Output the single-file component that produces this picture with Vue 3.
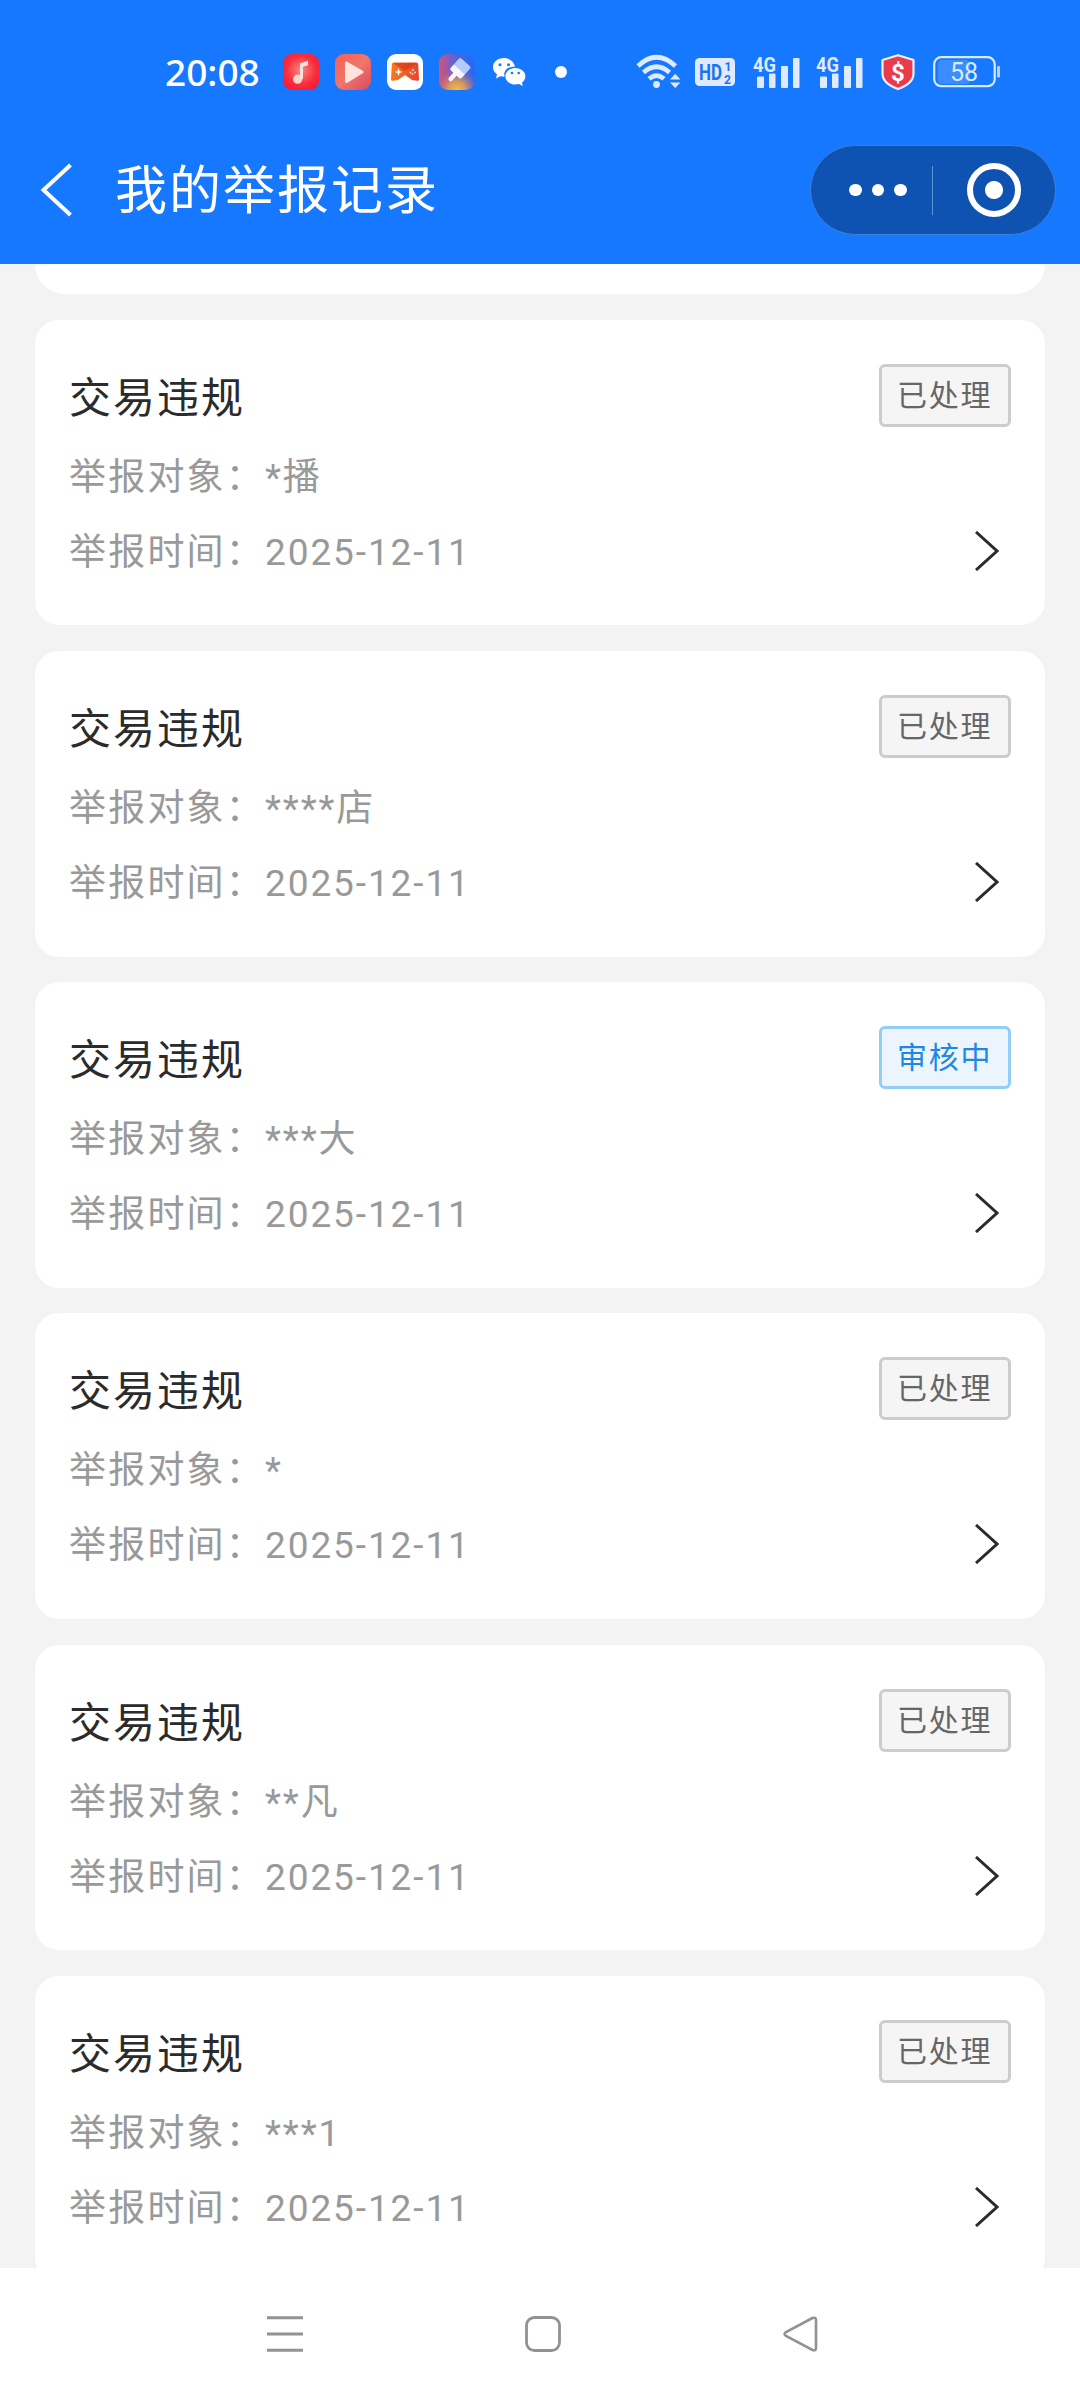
<template>
  <div class="page">
    <div class="status-bar">
      <span class="clock">20:08</span>
      <div class="app-icons">
        <svg class="app-icon" viewBox="0 0 36 36">
          <defs>
            <radialGradient id="music" cx="50%" cy="45%" r="65%">
              <stop offset="0" stop-color="#f98a80" />
              <stop offset="0.6" stop-color="#f8303f" />
              <stop offset="1" stop-color="#fb1530" />
            </radialGradient>
          </defs>
          <rect width="36" height="36" rx="9" fill="url(#music)" />
          <circle cx="14.600" cy="25.200" r="4.600" fill="#ffd3c8" />
          <path d="M17 25V9.500l8-3v4.800l-5 1.500V25z" fill="#ffe2da" />
        </svg>
        <svg class="app-icon" viewBox="0 0 36 36">
          <defs>
            <linearGradient id="video" x1="0" y1="0" x2="1" y2="1">
              <stop offset="0" stop-color="#f4604f" />
              <stop offset="0.5" stop-color="#f0766a" />
              <stop offset="1" stop-color="#d84a63" />
            </linearGradient>
          </defs>
          <rect width="36" height="36" rx="9" fill="url(#video)" />
          <path d="M11.500 9v18.500L27 18z" fill="#ffe3dc" stroke="#ffe3dc" stroke-width="3" stroke-linejoin="round" />
        </svg>
        <svg class="app-icon" viewBox="0 0 36 36">
          <defs>
            <linearGradient id="game" x1="0" y1="0" x2="1" y2="0">
              <stop offset="0" stop-color="#f57a1c" />
              <stop offset="1" stop-color="#e8432c" />
            </linearGradient>
          </defs>
          <rect width="36" height="36" rx="9" fill="#fff" />
          <path d="M7 8.500h22q2.200 0 2.200 2l.8 14.500q0 2.200-2 1.800l-5-.8-7-5-7 5-5 .8q-2 .4-2-1.800L4.800 10.500q.2-2 2.200-2z" fill="url(#game)" />
          <path d="M6 9h24l-12 8z" fill="#d2301c" fill-opacity="0.55" />
          <path d="M11.500 14l1.100 2.900 2.900 1.100-2.900 1.100-1.100 2.900-1.100-2.900L7.500 18l2.900-1.100z" fill="#fff" />
          <g fill="#ffd9cc">
            <circle cx="26" cy="16" r="1" />
            <circle cx="23.500" cy="18.500" r="1" />
            <circle cx="28" cy="18.500" r="1" />
            <circle cx="25.500" cy="20" r="1" />
          </g>
        </svg>
        <svg class="app-icon" viewBox="0 0 36 36">
          <defs>
            <linearGradient id="theme" x1="0" y1="0" x2="1" y2="0">
              <stop offset="0" stop-color="#e0506a" />
              <stop offset="0.3" stop-color="#7a60c0" />
              <stop offset="0.6" stop-color="#3a6ae8" />
              <stop offset="1" stop-color="#2a68f0" />
            </linearGradient>
            <radialGradient id="themeGlow" cx="50%" cy="100%" r="60%">
              <stop offset="0" stop-color="#f6c02c" />
              <stop offset="0.4" stop-color="#eaa34c" stop-opacity="0.85" />
              <stop offset="1" stop-color="#e0605a" stop-opacity="0" />
            </radialGradient>
          </defs>
          <rect width="36" height="36" rx="9" fill="url(#theme)" />
          <rect width="36" height="36" rx="9" fill="url(#themeGlow)" />
          <g transform="rotate(42 18 18)">
            <rect x="10.500" y="5" width="15" height="11" rx="2" fill="#b4ccfa" />
            <path d="M10.500 14.500h15v4.500q0 2-2 2h-3.300v6.500q0 2.200-2.200 2.200t-2.200-2.200V21h-3.300q-2 0-2-2z" fill="#f8f4f8" />
          </g>
        </svg>
        <svg class="wechat" viewBox="0 0 34 30">
          <path d="M12 1C5.500 1 1 5 1 10.300c0 3 1.500 5.300 4 7L4 21.500l4.300-2.300c1.600.4 3 .5 4.300.4C11 13.500 16 9.300 23 9.700 22 4.500 17.500 1 12 1z" fill="#fff" />
          <path d="M23.300 11c-5.700 0-10 3.700-10 8.300s4.300 8.300 10 8.300c1.300 0 2.500-.2 3.600-.5l4 2-1-3.400c2.200-1.500 3.500-3.800 3.500-6.400 0-4.600-4.400-8.300-10.100-8.300z" fill="#fff" />
          <g fill="#1677ff">
            <circle cx="8" cy="7.800" r="1.500" />
            <circle cx="16.500" cy="7.800" r="1.500" />
            <circle cx="20" cy="16" r="1.300" />
            <circle cx="26.700" cy="16" r="1.300" />
          </g>
        </svg>
        <span class="more-dot"></span>
      </div>
      <div class="sys-icons">
        <svg class="wifi" viewBox="0 0 46 36">
          <g fill="none" stroke="#dfeaff" stroke-width="4.600">
            <path d="M2 12Q20.500-5.500 39.500 12" />
            <path d="M7.500 18.500q13-11.500 26 0" />
            <path d="M13 24.800q7.500-6.500 15 0" />
          </g>
          <circle cx="20.500" cy="30.500" r="3.400" fill="#dfeaff" />
          <path d="M34 25.500l5.200-5.800 5.200 5.800zM34 28.500h10.400L39.200 34z" fill="#dfeaff" />
        </svg>
        <svg class="hd" viewBox="0 0 40 28">
          <rect width="40" height="28" rx="4.500" fill="#dfeaff" />
          <text x="4" y="22" class="hd-text" textLength="23" lengthAdjust="spacingAndGlyphs">HD</text>
          <text x="29.500" y="12.500" class="hd-num">1</text>
          <text x="29" y="25.500" class="hd-num">2</text>
        </svg>
        <svg v-for="n in 2" :key="n" class="signal" viewBox="0 -8 48 42">
          <text x="0" y="16.500" class="signal-text" textLength="23" lengthAdjust="spacingAndGlyphs">4G</text>
          <g fill="#dfeaff">
            <rect x="4" y="21.500" width="7" height="11.500" rx="1" />
            <rect x="16" y="18.500" width="6.500" height="14.500" rx="1" />
            <rect x="28" y="11" width="7" height="22" rx="1" />
            <rect x="40" y="3" width="6.500" height="30" rx="1" />
          </g>
        </svg>
        <svg class="shield" viewBox="0 0 34 36">
          <path d="M17 1.200L32.500 6v13.500c0 7-7 12.500-15.500 15.500C8.500 32 1.500 26.500 1.500 19.500V6z" fill="#e93b4b" stroke="#eef0ff" stroke-width="2.200" stroke-linejoin="round" />
          <text x="17" y="26.500" text-anchor="middle" class="shield-text">$</text>
        </svg>
        <svg class="battery" viewBox="0 0 68 32">
          <rect x="5" y="4" width="32" height="24" rx="4" fill="#3d8cff" />
          <rect x="1.200" y="1.200" width="60.500" height="29" rx="7" fill="none" stroke="#d5ebff" stroke-width="2.200" />
          <rect x="64" y="10" width="3" height="11.500" rx="1.200" fill="#b5d4ff" />
          <text x="31" y="24.500" text-anchor="middle" class="battery-text">58</text>
        </svg>
      </div>
    </div>

    <div class="nav-bar">
      <svg class="back" viewBox="0 0 32 54">
        <path d="M30.500 2L3.500 27l27 25" fill="none" stroke="#fff" stroke-width="4" />
      </svg>
      <h1 class="nav-title">我的举报记录</h1>
      <div class="capsule">
        <div class="dots"><i></i><i></i><i></i></div>
        <span class="divider"></span>
        <span class="target"></span>
      </div>
    </div>

    <div class="list">
      <div class="card card-peek"></div>
      <div v-for="(item, index) in records" :key="index" class="card">
        <div class="card-head">
          <span class="card-title">{{ item.title }}</span>
          <span class="tag" :class="{ pending: item.status === '审核中' }">{{ item.status }}</span>
        </div>
        <div class="row">
          <span class="label">举报对象：</span>
          <span class="value">{{ item.target }}</span>
        </div>
        <div class="row">
          <span class="label">举报时间：</span>
          <span class="value">{{ item.date }}</span>
          <svg class="arrow" viewBox="0 0 24 40">
            <path d="M1 1l21 19L1 39" fill="none" stroke="#2b2b2b" stroke-width="3" />
          </svg>
        </div>
      </div>
    </div>

    <div class="system-nav">
      <svg class="sys-btn" viewBox="0 0 36 36">
        <path d="M0 1.700h36M0 18h36M0 34.300h36" fill="none" stroke="#929292" stroke-width="3" />
      </svg>
      <svg class="sys-btn" viewBox="0 0 36 36">
        <rect x="1.500" y="1.500" width="33" height="33" rx="8" fill="none" stroke="#929292" stroke-width="2.800" />
      </svg>
      <svg class="sys-btn" viewBox="0 0 36 36">
        <path d="M29.500 2L3 16q-3 2 0 4l26.500 14q3.500 1.200 3.500-2V4q0-3.200-3.500-2z" fill="none" stroke="#929292" stroke-width="2.600" />
      </svg>
    </div>
  </div>
</template>

<script setup>
import { ref } from 'vue'

// 举报记录列表
const records = ref([
  { title: '交易违规', target: '*播', date: '2025-12-11', status: '已处理' },
  { title: '交易违规', target: '****店', date: '2025-12-11', status: '已处理' },
  { title: '交易违规', target: '***大', date: '2025-12-11', status: '审核中' },
  { title: '交易违规', target: '*', date: '2025-12-11', status: '已处理' },
  { title: '交易违规', target: '**凡', date: '2025-12-11', status: '已处理' },
  { title: '交易违规', target: '***1', date: '2025-12-11', status: '已处理' }
])
</script>

<style>
body {
  margin: 0;
  background: #f3f3f4;
}
</style>

<style scoped>
.page {
  display: flex;
  flex-direction: column;
  width: 1080px;
  height: 2400px;
  overflow: hidden;
  background: #f3f3f4;
  font-family: Roboto, "Noto Sans CJK SC", sans-serif;
}

svg {
  display: block;
  flex: none;
}

/* 状态栏 */
.status-bar {
  display: flex;
  align-items: center;
  box-sizing: border-box;
  flex: none;
  height: 144px;
  padding: 0 79px 0 165px;
  background: #1677ff;
}

.clock {
  width: 118px;
  margin-top: -1px;
  font-family: "Noto Sans", sans-serif;
  font-size: 37px;
  font-weight: 500;
  color: #fff;
}

.app-icons {
  display: flex;
  align-items: center;
  gap: 16px;
}

.app-icon {
  width: 36px;
  height: 36px;
}

.wechat {
  width: 34px;
  height: 30px;
  margin-left: 1px;
}

.more-dot {
  width: 12px;
  height: 12px;
  margin-left: 13px;
  border-radius: 50%;
  background: #fff;
}

.sys-icons {
  display: flex;
  align-items: center;
  margin-left: auto;
}

.wifi {
  width: 46px;
  height: 36px;
}

.hd {
  width: 40px;
  height: 28px;
  margin-left: 13px;
}

.hd-text {
  font-size: 22.500px;
  font-weight: 700;
  fill: #1c72f0;
}

.hd-num {
  font-size: 12px;
  font-weight: 700;
  fill: #1c72f0;
}

.signal {
  width: 48px;
  height: 42px;
  margin-top: -8px;
  margin-left: 18px;
}

.signal + .signal {
  margin-left: 15px;
}

.signal-text {
  font-size: 21px;
  font-weight: 700;
  fill: #dfeaff;
}

.shield {
  width: 34px;
  height: 36px;
  margin-left: 17px;
}

.shield-text {
  font-size: 24px;
  font-weight: 700;
  fill: #fff;
}

.battery {
  width: 68px;
  height: 32px;
  margin-left: 18px;
}

.battery-text {
  font-size: 25px;
  fill: #d5ebff;
}

/* 导航栏 */
.nav-bar {
  display: flex;
  align-items: center;
  box-sizing: border-box;
  flex: none;
  height: 120px;
  padding: 0 24px 28px 40px;
  background: #1677ff;
}

.back {
  width: 32px;
  height: 54px;
}

.nav-title {
  margin: 3px 0 0 43px;
  font-size: 52px;
  font-weight: 400;
  letter-spacing: 2px;
  line-height: 60px;
  color: #fff;
}

.capsule {
  display: flex;
  align-items: center;
  box-sizing: border-box;
  width: 246px;
  height: 90px;
  margin-left: auto;
  padding-left: 38px;
  border: 1px solid #3c7fd8;
  border-radius: 45px;
  background: #0f53b2;
}

.dots {
  display: flex;
  gap: 10px;
}

.dots i {
  width: 12.500px;
  height: 12.500px;
  border-radius: 50%;
  background: #fff;
}

.divider {
  width: 1px;
  height: 49px;
  margin: 0 34px 0 25px;
  background: #5f93d6;
}

.target {
  box-sizing: border-box;
  width: 54px;
  height: 54px;
  border: 6px solid #fff;
  border-radius: 50%;
  background: radial-gradient(circle, #fff 8.500px, transparent 9.500px);
}

/* 列表 */
.list {
  display: flex;
  flex: 1;
  flex-direction: column;
  gap: 25.600px;
  min-height: 0;
  padding: 0 35px;
  overflow: hidden;
}

.card {
  box-sizing: border-box;
  flex: none;
  height: 305.700px;
  padding: 44px 34px 0;
  border-radius: 24px;
  background: #fff;
}

.card-peek {
  height: 30px;
  padding: 0;
  border-radius: 0 0 30px 30px;
}

.card-head {
  display: flex;
  align-items: center;
  justify-content: space-between;
  height: 63px;
  margin-bottom: 11px;
}

.card-title {
  padding-top: 7px;
  font-size: 42px;
  letter-spacing: 2px;
  line-height: 60px;
  color: #2b2b2b;
}

.tag {
  box-sizing: border-box;
  width: 132px;
  height: 63px;
  padding-left: 15px;
  border: 3px solid #ccc;
  border-radius: 6px;
  background: #f5f5f5;
  font-size: 30px;
  letter-spacing: 1.800px;
  line-height: 57px;
  white-space: nowrap;
  color: #666;
}

.tag.pending {
  border-color: #91cdf5;
  background: #ecf4fd;
  color: #1e88e5;
}

.row {
  display: flex;
  align-items: baseline;
  height: 75px;
  font-size: 37px;
  letter-spacing: 2.200px;
  line-height: 79px;
  white-space: nowrap;
  color: #999;
}

.value {
  letter-spacing: 1.900px;
}

.arrow {
  align-self: center;
  width: 24px;
  height: 40px;
  margin: 1px 12px 0 auto;
}

/* 系统导航键 */
.system-nav {
  display: flex;
  align-items: center;
  justify-content: space-between;
  box-sizing: border-box;
  flex: none;
  height: 132px;
  padding: 0 261px 0 267px;
  background: #fff;
}

.sys-btn {
  width: 36px;
  height: 36px;
}
</style>
